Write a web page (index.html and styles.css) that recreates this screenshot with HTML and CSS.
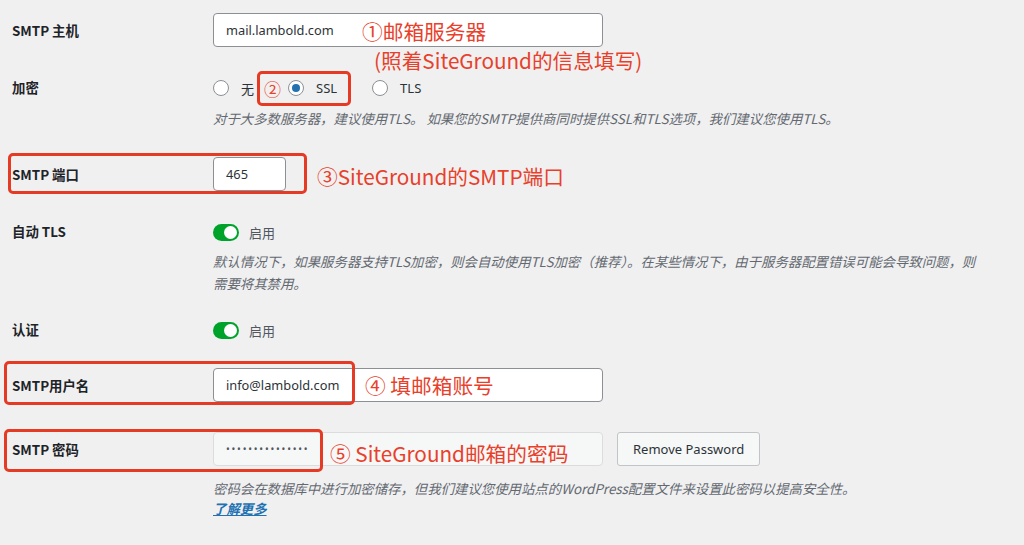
FILE: index.html
```html
<!DOCTYPE html>
<html lang="zh-CN">
<head>
  <meta charset="UTF-8" />
  <meta name="viewport" content="width=device-width, initial-scale=1.0" />
  <title>SMTP 设置</title>
  <link rel="stylesheet" href="styles.css">
</head>
<body>
  <div class="settings">

    <div class="row row-host">
      <div class="label">SMTP 主机</div>
      <div class="field">
        <input class="text-input" type="text" value="mail.lambold.com">
      </div>
      <span class="note note-host">①邮箱服务器</span>
      <span class="note note-host2">(照着SiteGround的信息填写)</span>
    </div>

    <div class="row row-enc">
      <div class="label label-line">加密</div>
      <div class="field">
        <div class="radios">
          <span class="radio"></span><span class="radio-text">无</span>
          <span class="marked">
            <span class="num">②</span>
            <span class="radio checked"></span><span class="radio-text">SSL</span>
          </span>
          <span class="radio radio-tls"></span><span class="radio-text">TLS</span>
        </div>
        <p class="help">对于大多数服务器，建议使用TLS。 如果您的SMTP提供商同时提供SSL和TLS选项，我们建议您使用TLS。</p>
      </div>
    </div>

    <div class="row row-port">
      <div class="label">SMTP 端口</div>
      <div class="field">
        <input class="text-input small" type="text" value="465">
      </div>
      <span class="box box-port"></span>
      <span class="note note-port">③SiteGround的SMTP端口</span>
    </div>

    <div class="row row-autotls">
      <div class="label label-line">自动 TLS</div>
      <div class="field">
        <div class="toggle-line">
          <span class="toggle"><span class="knob"></span></span>
          <span class="toggle-text">启用</span>
        </div>
        <p class="help help-wide">默认情况下，如果服务器支持TLS加密，则会自动使用TLS加密（推荐）。在某些情况下，由于服务器配置错误可能会导致问题，则需要将其禁用。</p>
      </div>
    </div>

    <div class="row row-auth">
      <div class="label label-line">认证</div>
      <div class="field">
        <div class="toggle-line">
          <span class="toggle"><span class="knob"></span></span>
          <span class="toggle-text">启用</span>
        </div>
      </div>
    </div>

    <div class="row row-user">
      <div class="label">SMTP用户名</div>
      <div class="field">
        <input class="text-input" type="text" value="info@lambold.com">
      </div>
      <span class="box box-user"></span>
      <span class="note note-user">④ 填邮箱账号</span>
    </div>

    <div class="row row-pass">
      <div class="label">SMTP 密码</div>
      <div class="field">
        <div class="pass-line">
          <div class="text-input pass">•••••••••••••••</div>
          <button class="button">Remove Password</button>
        </div>
        <p class="help help-pass">密码会在数据库中进行加密储存，但我们建议您使用站点的WordPress配置文件来设置此密码以提高安全性。</p>
        <a class="learn" href="#">了解更多</a>
      </div>
      <span class="box box-pass"></span>
      <span class="note note-pass">⑤ SiteGround邮箱的密码</span>
    </div>

  </div>
</body>
</html>
```

FILE: styles.css
```css
body {
  margin: 0;
  background: #f0f0f1;
  color: #1d2327;
  font-family: "Noto Sans", "Noto Sans CJK SC", sans-serif;
  font-size: 14px;
}
.settings { padding-bottom: 20px; }

.row {
  position: relative;
  display: grid;
  grid-template-columns: 201px 1fr;
  padding-left: 12px;
}
.row-host { margin-top: 13px; }
.row-enc { margin-top: 31px; }
.row-port { margin-top: 28px; }
.row-autotls { margin-top: 31px; }
.row-auth { margin-top: 26px; }
.row-user { margin-top: 28px; }
.row-pass { margin-top: 30px; }

.label {
  font-family: "Noto Sans CJK SC", sans-serif;
  font-weight: 700;
  font-size: 13.4px;
  line-height: 34px;
  height: 34px;
}
.label-line { line-height: 18px; height: 18px; }

.text-input {
  box-sizing: border-box;
  width: 390px;
  height: 34px;
  padding: 0 12px;
  border: 1px solid #8c8f94;
  border-radius: 4px;
  background: #fff;
  color: #2c3338;
  font-family: "Noto Sans", "Noto Sans CJK SC", sans-serif;
  font-size: 12.8px;
}
.text-input.small { width: 73px; }
.text-input.pass {
  display: flex;
  align-items: center;
  background: #f6f7f7;
  border-color: #dcdcde;
  color: #50575e;
  font-size: 10px;
  letter-spacing: 1.8px;
}

.radios {
  display: flex;
  align-items: center;
  height: 20px;
  font-size: 13px;
}
.radio {
  box-sizing: border-box;
  width: 16px;
  height: 16px;
  border: 1px solid #8c8f94;
  border-radius: 50%;
  background: #fff;
  position: relative;
}
.radio.checked::after {
  content: "";
  position: absolute;
  left: 3px;
  top: 3px;
  width: 8px;
  height: 8px;
  border-radius: 50%;
  background: #2271b1;
}
.radio-text { margin-left: 12px; color: #2c3338; }
.marked {
  display: inline-flex;
  align-items: center;
  box-sizing: border-box;
  height: 35px;
  margin-left: 3px;
  padding: 0 11px 0 4px;
  border: 3px solid #e53a24;
  border-radius: 5px;
}
.marked .num {
  color: #e8402a;
  font-size: 17px;
  margin-right: 7px;
  font-family: "Noto Sans CJK SC", sans-serif;
}
.radio-tls { margin-left: 21px; }

.help {
  margin: 9px 0 0;
  font-family: "Noto Sans CJK SC", sans-serif;
  font-size: 13.4px;
  line-height: 22px;
  font-style: italic;
  color: #646970;
}
.help-wide { max-width: 768px; margin-top: 8px; }
.help-pass { margin-top: 11px; }

.toggle-line {
  display: flex;
  align-items: center;
  height: 20px;
}
.toggle {
  position: relative;
  width: 26px;
  height: 17px;
  border-radius: 9px;
  background: #00a32a;
}
.knob {
  position: absolute;
  right: 2px;
  top: 2px;
  width: 13px;
  height: 13px;
  border-radius: 50%;
  background: #fff;
}
.toggle-text { margin-left: 10px; font-size: 13px; color: #50575e; }

.pass-line { display: flex; gap: 14px; }
.button {
  height: 34px;
  padding: 0 15px;
  border: 1px solid #c3c4c7;
  border-radius: 3px;
  background: #f6f7f7;
  color: #2c3338;
  font-family: "Noto Sans", "Noto Sans CJK SC", sans-serif;
  font-size: 13px;
}
.learn {
  display: inline-block;
  font-family: "Noto Sans CJK SC", sans-serif;
  font-size: 13.4px;
  line-height: 18px;
  font-style: italic;
  font-weight: 700;
  color: #2271b1;
}

/* red annotations laid over the screenshot */
.box {
  position: absolute;
  box-sizing: border-box;
  border: 3px solid #e53a24;
  border-radius: 5px;
}
.box-port { left: 8px; top: -4px; width: 299px; height: 41px; }
.box-user { left: 4px; top: -7px; width: 351px; height: 44px; }
.box-pass { left: 4px; top: -3px; width: 319px; height: 43px; }

.note {
  position: absolute;
  color: #e8402a;
  font-family: "Noto Sans CJK SC", sans-serif;
  font-size: 20.7px;
  line-height: 28px;
  white-space: nowrap;
}
.note-host { left: 362px; top: 4px; }
.note-host2 { left: 374px; top: 33px; }
.note-port { left: 317px; top: 5px; }
.note-user { left: 365px; top: 3px; }
.note-pass { left: 330px; top: 7px; }
```
